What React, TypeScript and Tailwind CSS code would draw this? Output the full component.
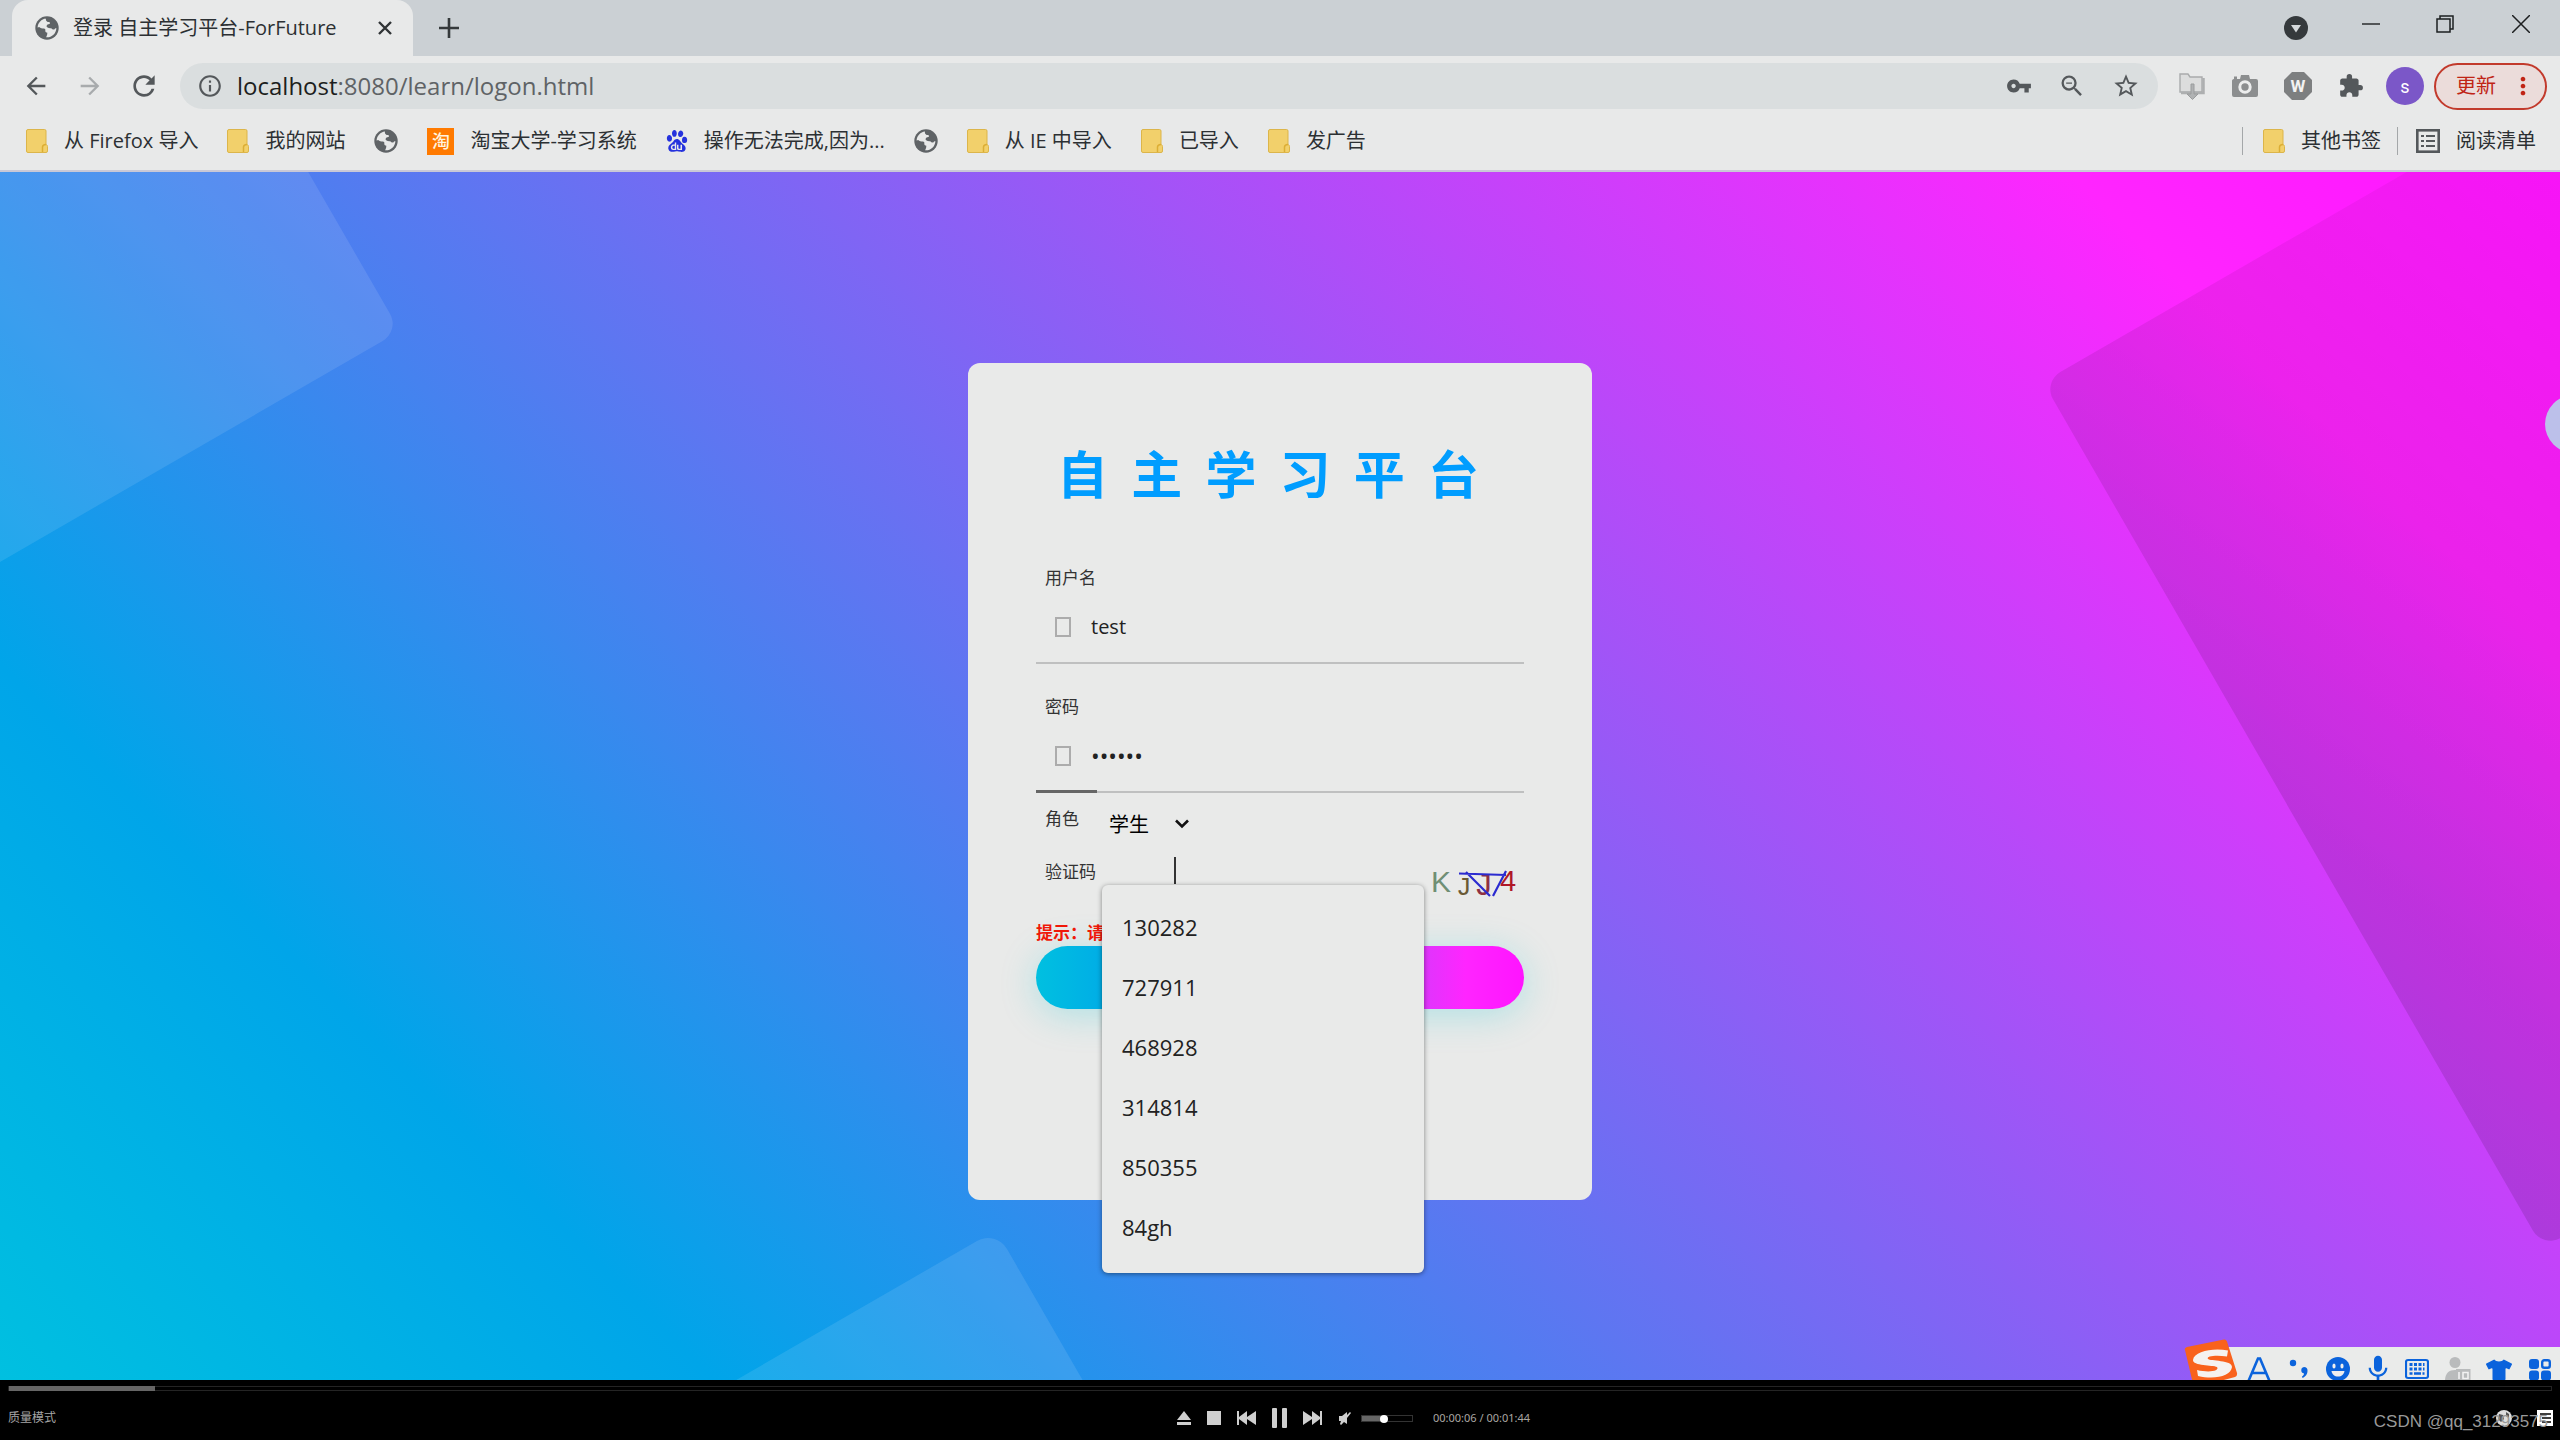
import React from "react";
import {
  MdArrowBack,
  MdArrowForward,
  MdRefresh,
  MdInfoOutline,
  MdVpnKey,
  MdZoomOut,
  MdStarOutline,
  MdExtension,
  MdMoreVert,
  MdMic,
} from "react-icons/md";
import { SiBaidu } from "react-icons/si";
import { FaTshirt } from "react-icons/fa";

const Globe = () => (
  <svg viewBox="0 0 24 24" className="size-6 shrink-0" aria-hidden="true">
    <circle cx="12" cy="12" r="11.7" fill="#5f6366" />
    <path
      d="M11 2.6C6.4 3.2 2.9 6.900 2.600 11.400L4.200 11c1.300 1.100 2.900 1.600 4.600 1.600 1.300.1 1.700.8 1.500 1.900-.2 1.300.5 2 1.900 2.100.3 1.600-.2 3.100-1.100 4.700 5.500.4 10-3.700 10.300-9.100-.9-.1-1.600.5-2.100 1.200-1.200.3-2.300-.1-3-1.200-1.500.2-2.900 0-4.100-.9-.9-.9-.7-2.100.3-2.900 1.200-.5 2.600-.2 2.500-1.500-.1-1.200-1.900-.6-2.800-1.100-1-.7-1.600-1.700-1.200-3.200Z"
      fill="#e8e9e9"
    />
  </svg>
);

const Folder = () => (
  <svg viewBox="0 0 22 24" className="h-6 w-[22px] shrink-0" aria-hidden="true">
    <path d="M2 .5h16.500a1.500 1.500 0 0 1 1.500 1.500v13.500c1 .3 1.500 1 1.500 2V22a1.500 1.500 0 0 1-1.500 1.500H2A1.500 1.500 0 0 1 .5 22V2A1.500 1.500 0 0 1 2 .5Z" fill="#f2d06b" stroke="#dcb54a" />
    <path d="M16.500 23v-5c0-1.500 1-2.300 3.500-2.500" fill="none" stroke="#dcae34" strokeWidth="1.500" />
  </svg>
);

const ReadingList = () => (
  <svg viewBox="0 0 24 24" className="size-6 shrink-0" aria-hidden="true">
    <rect x="1.300" y="1.300" width="21.400" height="21.400" fill="none" stroke="#54585b" strokeWidth="2.600" />
    <path d="M5 7h3M5 12h3M5 17h3M10 7h9M10 12h9M10 17h9" stroke="#54585b" strokeWidth="2" />
  </svg>
);

function Bookmark({ icon, label }: { icon: React.ReactNode; label?: string }) {
  return (
    <a href="#" aria-label={label ?? "网页"} className="flex h-8 shrink-0 items-center gap-4 whitespace-nowrap">
      {icon}
      {label && <span>{label}</span>}
    </a>
  );
}

function TabStrip() {
  return (
    <div className="flex h-14 items-stretch bg-[#cbd0d4] pl-3">
      <div className="flex w-[401px] items-center rounded-t-2xl bg-[#e8e9e9] pr-4 pl-[23px]">
        <Globe />
        <span className="ml-3.5 flex-1 text-[20px] whitespace-nowrap text-[#2c3033]">登录 自主学习平台-ForFuture</span>
        <button aria-label="关闭标签页" className="flex size-6 items-center justify-center">
          <svg viewBox="0 0 14 14" className="size-3.5">
            <path d="M1 1l12 12M13 1L1 13" stroke="#303436" strokeWidth="2.400" />
          </svg>
        </button>
      </div>
      <button aria-label="新标签页" className="ml-6 flex w-6 items-center justify-center">
        <svg viewBox="0 0 20 20" className="size-5">
          <path d="M10 0v20M0 10h20" stroke="#35393b" strokeWidth="2.600" />
        </svg>
      </button>
      <div className="ml-auto flex items-center pr-[30px]">
        <button aria-label="搜索标签页" className="mr-[54px]">
          <svg viewBox="0 0 24 24" className="size-6">
            <circle cx="12" cy="12" r="12" fill="#35393c" />
            <path d="M7 9h10l-5 7.500Z" fill="#d5d9dc" />
          </svg>
        </button>
        <button aria-label="最小化" className="mr-14 pb-2">
          <svg viewBox="0 0 18 18" className="size-[18px]">
            <path d="M0 9h18" stroke="#2a2c2e" strokeWidth="1.500" />
          </svg>
        </button>
        <button aria-label="还原" className="mr-[58px] pb-2">
          <svg viewBox="0 0 18 18" className="size-[18px]" fill="none" stroke="#1d1f20" strokeWidth="1.500">
            <path d="M1 4h13v13H1zM4 4V1h13v13h-3" />
          </svg>
        </button>
        <button aria-label="关闭" className="pb-2">
          <svg viewBox="0 0 18 18" className="size-[18px]">
            <path d="M0 0l18 18M18 0L0 18" stroke="#1d1f20" strokeWidth="1.500" />
          </svg>
        </button>
      </div>
    </div>
  );
}

function Toolbar() {
  return (
    <div className="flex h-15 items-center bg-[#e8e9e9] pr-[13px] pl-[22px] text-[#54585b]">
      <button aria-label="后退"><MdArrowBack className="size-7" /></button>
      <button aria-label="前进" className="ml-[26px] text-[#a8abad]"><MdArrowForward className="size-7" /></button>
      <button aria-label="重新加载" className="ml-[24px]"><MdRefresh className="size-8" /></button>
      <div className="ml-5 flex h-[46px] flex-1 items-center rounded-full bg-[#dadedf] pr-[18px] pl-[17px]">
        <MdInfoOutline className="size-[26px]" />
        <div className="ml-3.5 flex-1 text-[24px] leading-8 text-[#5f6366]">
          <span className="text-[#1d1f20]">localhost</span>:8080/learn/logon.html
        </div>
        <div className="flex items-center gap-[26px]">
          <button aria-label="密码"><MdVpnKey className="size-[26px]" /></button>
          <button aria-label="缩放"><MdZoomOut className="size-7" /></button>
          <button aria-label="收藏"><MdStarOutline className="size-7" /></button>
        </div>
      </div>
      <div className="ml-5 flex items-center gap-[26px]">
        <button aria-label="下载扩展程序">
          <svg viewBox="0 0 28 28" className="size-7">
            <path d="M2 2h8l2 3h12v15H2z" fill="#dcdddd" stroke="#a9abac" strokeWidth="1.400" />
            <path d="M25.500 6v15H3" fill="none" stroke="#adafb0" strokeWidth="2.500" />
            <path d="M13 12h3v10h4l-5.500 5.500L9 22h4Z" fill="#b0b2b3" stroke="#9a9c9d" />
          </svg>
        </button>
        <button aria-label="截图扩展程序">
          <svg viewBox="0 0 26 24" className="h-6 w-[26px]">
            <path d="M2 2.500h3V5h3l1-4h8l1 4h6a2 2 0 0 1 2 2v14a2 2 0 0 1-2 2H2a2 2 0 0 1-2-2V7c0-1 .500-2 2-2Z" fill="#8c8e8f" />
            <circle cx="13" cy="13" r="5.200" fill="none" stroke="#eceded" strokeWidth="3" />
          </svg>
        </button>
        <button aria-label="W 扩展程序">
          <svg viewBox="0 0 28 28" className="size-7">
            <path d="M8 0h12l8 8v12l-8 8H8l-8-8V8Z" fill="#7d7f80" />
            <text x="14" y="20" textAnchor="middle" fill="#f2f2f2" className="font-['Roboto'] text-[17px] font-bold">W</text>
          </svg>
        </button>
        <button aria-label="扩展程序"><MdExtension className="size-[26px]" /></button>
      </div>
      <button className="ml-[22px] size-[38px] rounded-full bg-[#7b57c8] font-['Roboto'] text-[18px] text-white" aria-label="用户 s">s</button>
      <button className="ml-2.5 flex h-[47px] w-[113px] items-center justify-between rounded-full border-2 border-[#c23a2c] bg-[#ebdcda] pr-2 pl-5 text-[20px] text-[#c02415]">
        更新
        <MdMoreVert className="size-7" />
      </button>
    </div>
  );
}

function Bookmarks() {
  return (
    <div className="flex h-14 items-center border-b-2 border-[#c9c8d6] bg-[#e8e9e9] pr-6 pb-1 pl-[26px] text-[20px] text-[#2c3033]">
      <nav className="flex items-center gap-[29px]">
        <Bookmark icon={<Folder />} label="从 Firefox 导入" />
        <Bookmark icon={<Folder />} label="我的网站" />
        <Bookmark icon={<Globe />} />
        <Bookmark
          icon={<span aria-hidden="true" className="flex size-[27px] items-center justify-center bg-[#ff7a00] text-[18px] font-medium text-[#fff3df]">淘</span>}
          label="淘宝大学-学习系统"
        />
        <Bookmark icon={<SiBaidu className="size-[22px] text-[#2532dd]" />} label="操作无法完成,因为..." />
        <Bookmark icon={<Globe />} />
        <Bookmark icon={<Folder />} label="从 IE 中导入" />
        <Bookmark icon={<Folder />} label="已导入" />
        <Bookmark icon={<Folder />} label="发广告" />
      </nav>
      <div className="ml-auto flex items-center gap-4">
        <span className="mr-1 h-7 w-px bg-[#a4a7a9]" />
        <Bookmark icon={<Folder />} label="其他书签" />
        <span className="mr-0.5 h-7 w-px bg-[#a4a7a9]" />
        <Bookmark icon={<ReadingList />} label="阅读清单" />
      </div>
    </div>
  );
}

const Backdrop = () => (
  <svg viewBox="0 0 2560 1208" preserveAspectRatio="xMidYMid slice" className="absolute inset-0 size-full" aria-hidden="true">
    <defs>
      <linearGradient id="shade" x1="0" y1="0.500" x2="0.700" y2="0.200">
        <stop offset="0" stopColor="#000" stopOpacity="0.120" />
        <stop offset="1" stopColor="#000" stopOpacity="0.020" />
      </linearGradient>
    </defs>
    <rect x="-600" y="-441" width="1000" height="600" rx="20" fill="#fff" fillOpacity="0.100" transform="rotate(-30 400 159)" />
    <rect x="396" y="1058" width="600" height="600" rx="22" fill="#fff" fillOpacity="0.100" transform="rotate(-30 996 1058)" />
    <rect x="2043" y="210" width="1000" height="1000" rx="20" fill="url(#shade)" transform="rotate(-30 2043 210)" />
  </svg>
);

function Field({ id, label, type, value, active }: { id: string; label: string; type: string; value: string; active?: boolean }) {
  return (
    <div className="relative border-b-2 border-[#bfc0c0]">
      <label htmlFor={id} className="block pl-[9px] text-[17px] leading-6 text-[#333]">{label}</label>
      <div className="flex h-[72px] items-center pt-0.5 pl-[19px]">
        <span className="h-5 w-4 border-2 border-[#acacac]" />
        <input
          id={id}
          type={type}
          defaultValue={value}
          className={`ml-5 h-full min-w-0 flex-1 bg-transparent text-[#222] outline-none ${type === "password" ? "text-[23px]" : "text-[20px]"}`}
        />
      </div>
      {active && <span className="absolute -bottom-0.5 left-0 h-[3px] w-[61px] bg-[#666]" />}
    </div>
  );
}

const suggestions = ["130282", "727911", "468928", "314814", "850355", "84gh"];

function LoginCard() {
  return (
    <form className="relative mt-2.5 w-[624px] rounded-xl bg-[#e9eae9] px-17 pt-[79px] pb-[191px]">
      <h1 className="pr-6 text-center font-['Noto_Sans_CJK_SC',sans-serif] text-[51px] leading-15 font-bold whitespace-pre text-[#009dff]">
        自  主  学  习  平  台
      </h1>
      <div className="mt-16">
        <Field id="user" label="用户名" type="text" value="test" />
      </div>
      <div className="mt-[31px]">
        <Field id="pass" label="密码" type="password" value="123456" active />
      </div>
      <div className="mt-3.5 flex items-start pl-[9px]">
        <label htmlFor="role" className="w-16 text-[17px] leading-6 text-[#333]">角色</label>
        <div className="relative mt-0.5">
          <select id="role" className="h-8 w-[86px] appearance-none bg-transparent text-[20px] text-black outline-none">
            <option>学生</option>
            <option>教师</option>
          </select>
          <svg viewBox="0 0 14 10" className="pointer-events-none absolute top-2.5 right-1.5 h-2.5 w-3.5">
            <path d="M1 1.500l6 6 6-6" fill="none" stroke="#111" strokeWidth="2.600" />
          </svg>
        </div>
      </div>
      <div className="mt-4 flex h-[64px] items-start pl-[9px]">
        <label htmlFor="code" className="mt-[3px] w-[57px] text-[17px] leading-6 whitespace-nowrap text-[#333]">验证码</label>
        <div className="relative h-7 w-[322px]">
          <input id="code" type="text" className="h-full w-full bg-transparent pl-[72px] text-[20px] outline-none" />
          <span className="absolute top-0 left-[72px] h-[27px] w-0.5 bg-[#333]" />
          <ul role="listbox" aria-label="历史输入" className="absolute top-full left-0 z-10 w-full rounded-md bg-[#e9eae9] pt-3 pb-4 shadow-[0_1px_5px_rgba(0,0,0,0.450)]">
            {suggestions.map((s) => (
              <li key={s} role="option" aria-selected="false" className="flex h-15 items-center pl-5 text-[22px] leading-8 text-[#222]">{s}</li>
            ))}
          </ul>
        </div>
        <svg viewBox="0 0 92 52" className="ml-1 h-[52px] w-[92px] overflow-visible font-['Liberation_Sans']" role="img" aria-label="验证码图片">
          <text x="3" y="35" fontSize="30" fill="#6f8f74">K</text>
          <text x="28" y="38" fontSize="26" fill="#6b5a35" className="font-['Liberation_Mono']">J</text>
          <text x="46" y="38" fontSize="32" fill="#8f3142" className="font-['Liberation_Mono']">J</text>
          <text x="72" y="34" fontSize="29" fill="#b01828">4</text>
          <path d="M31 16.500l47 1.500M38 15l24 24M78 14L65 39" stroke="#2b2bd0" strokeWidth="2.200" fill="none" />
        </svg>
      </div>
      <p className="text-[17px] leading-6 font-bold text-[#f01808]">提示：请</p>
      <button
        type="button"
        aria-label="登录"
        className="mt-px block h-[63px] w-full rounded-full bg-[linear-gradient(90deg,#00c0e0_0%,#00a5e9_20%,#ff25ff_88%,#ff14ff_100%)] shadow-[0_6px_36px_rgba(0,200,215,0.250)]"
      />
    </form>
  );
}

function ImeBar() {
  return (
    <div className="absolute right-0 bottom-0 flex h-[33px] w-[340px] items-start bg-[#eaebea] pl-[27px] text-[#0b63dc]">
      <svg viewBox="0 0 54 50" className="absolute bottom-[-9px] left-[-36px] h-[50px] w-[54px]" aria-hidden="true">
        <path d="M1 11Q0 9 3 8L40 .5q2-.4 3 2L53 34q.5 3-2 4L10 49Z" fill="#f9621c" />
        <path d="M44 11.500C30 8.500 10 12 9 21c-.5 6 20 5 24 7 3 4-8 6-20 3l1 6c17 4 33 0 34-9 .5-7-22-6-24-8-2-3 8-4 19-2.500Z" fill="#f5f2ef" />
      </svg>
      <div className="flex w-full items-start justify-between pt-2.5 pr-2">
        <svg viewBox="0 0 24 24" className="size-6"><path d="M1.500 24L11 1.500h2L22.500 24M5.500 16h13" fill="none" stroke="currentColor" strokeWidth="2.600" /></svg>
        <svg viewBox="0 0 24 24" className="size-6" fill="currentColor"><circle cx="6" cy="6" r="3.200" /><path d="M17 10a3.500 3.500 0 0 1 3.500 3.500c0 4-2 6-5 7.500l-.5-1.500c1.500-1 2-1.800 2-3a3.300 3.300 0 0 1 0-6.500Z" /></svg>
        <svg viewBox="0 0 24 24" className="size-6"><circle cx="12" cy="12" r="12" fill="currentColor" /><ellipse cx="8" cy="9" rx="1.600" ry="2.600" fill="#eee" /><ellipse cx="16" cy="9" rx="1.600" ry="2.600" fill="#eee" /><path d="M5.500 14h13c-.5 3.500-3 5.500-6.500 5.500S6 17.500 5.500 14Z" fill="#eee" /></svg>
        <MdMic className="-mx-1 -mt-1 size-8" />
        <svg viewBox="0 0 24 24" className="size-6"><rect x="1" y="3" width="22" height="18" rx="2" fill="none" stroke="currentColor" strokeWidth="2.200" /><path d="M4.500 7.500h15M4.500 12h15" stroke="currentColor" strokeWidth="3" strokeDasharray="3 1.500" /><path d="M4.500 16.500h3M9 16.500h7M17.500 16.500h2" stroke="currentColor" strokeWidth="2.600" /></svg>
        <svg viewBox="0 0 26 26" className="size-[26px]"><circle cx="10" cy="5.500" r="5.500" fill="#b9bbbc" /><path d="M0 24c0-8 4-11 10-11h3v11Z" fill="#b9bbbc" /><rect x="11" y="12" width="14.500" height="13" fill="#b9bbbc" /><path d="M14 15v7M18 15.500h5v6h-5z" fill="none" stroke="#f2f2f2" strokeWidth="1.600" /></svg>
        <FaTshirt className="size-[26px]" />
        <svg viewBox="0 0 24 24" className="size-6" fill="currentColor"><rect x="1" y="2" width="10" height="10" rx="3" /><rect x="1" y="13.500" width="10" height="10" rx="3" /><rect x="13" y="13.500" width="10" height="10" rx="3" /><rect x="14.200" y="3.200" width="7.600" height="7.600" rx="2" fill="none" stroke="currentColor" strokeWidth="2.400" /></svg>
      </div>
    </div>
  );
}

function Player() {
  return (
    <footer className="relative h-15 overflow-hidden bg-black px-2 pt-1.5 font-['Noto_Sans',_'Noto_Sans_CJK_SC',sans-serif] text-[12px] text-[#aaa7a3]">
      <div className="h-[5px] border border-[#242424]">
        <div className="-my-px h-[5px] w-[146px] bg-[#666]" />
      </div>
      <div className="mt-3 flex h-[30px] items-center text-[#cfcfcf]">
        <div className="flex flex-1 basis-0 items-center gap-4">
          <span className="mr-auto text-[12px] text-[#a5a5a5]">质量模式</span>
          <button aria-label="弹出"><svg viewBox="0 0 14 14" className="size-3.5" fill="currentColor"><path d="M7 0l7 9H0zM0 11h14v3H0z" /></svg></button>
          <button aria-label="停止"><svg viewBox="0 0 14 14" className="size-3.5" fill="currentColor"><path d="M0 0h14v14H0z" /></svg></button>
          <button aria-label="上一个" className="mr-[15px]"><svg viewBox="0 0 20 14" className="h-3.5 w-5" fill="currentColor"><path d="M0 0h2v6l8-6v6l9-6v14l-9-6v6L2 8v6H0z" /></svg></button>
        </div>
        <button aria-label="暂停"><svg viewBox="0 0 16 20" className="h-5 w-4" fill="currentColor"><rect width="5" height="20" rx="1" /><rect x="10" width="5" height="20" rx="1" /></svg></button>
        <div className="flex flex-1 basis-0 items-center">
          <button aria-label="下一个" className="ml-[15px]"><svg viewBox="0 0 20 14" className="h-3.5 w-5" fill="currentColor"><path d="M19 0h-2v6L9 0v6L0 0v14l9-6v6l8-6v6h2z" /></svg></button>
          <button aria-label="静音" className="ml-4"><svg viewBox="0 0 12 14" className="h-3.5 w-3" fill="currentColor"><path d="M0 5h3l5-4v3l3-3 1 1-4 5v6l-3-2-3 3-1-1 1-3H0z" /></svg></button>
          <div className="relative ml-2.5 h-[7px] w-[52px] border border-[#333]">
            <div className="h-full w-[22px] bg-[#666]" />
            <span className="absolute -top-px left-[18px] size-2 rounded-full bg-white" />
          </div>
          <span className="ml-5 text-[11px] text-[#aaa7a3]">00:00:06 / 00:01:44</span>
        </div>
      </div>
      <div className="absolute top-[29px] right-1.5 flex items-center gap-6">
        <svg viewBox="0 0 16 16" className="size-4"><circle cx="8" cy="8" r="8" fill="#ddd" /><path d="M3 4l4 1 1 4-3 3-3-3zM10 2l3 2v4l-3-2z" fill="#555" /></svg>
        <svg viewBox="0 0 18 18" className="size-[18px]"><path d="M1 1h16v16H1z" fill="#fff" /><path d="M4 5h11M6 9h9M6 13h9" stroke="#000" strokeWidth="1.600" /></svg>
      </div>
      <span className="absolute top-[30px] right-3 font-['Liberation_Sans'] text-[17px] leading-6 text-[#999]">CSDN @qq_31293575</span>
    </footer>
  );
}

export default function App() {
  return (
    <div className="flex min-h-screen flex-col bg-black font-['Open_Sans','Noto_Sans_CJK_SC',sans-serif]">
      <header>
        <TabStrip />
        <Toolbar />
        <Bookmarks />
      </header>
      <main className="relative flex flex-1 items-center justify-center overflow-hidden bg-[linear-gradient(45deg,#00c0e0_0%,#00a5e9_19%,#ff25ff_87%,#ff14ff_100%)]">
        <Backdrop />
        <LoginCard />
        <span className="absolute top-[223px] right-[-43px] size-[58px] rounded-full bg-[#bcc0ea]" />
        <ImeBar />
      </main>
      <Player />
    </div>
  );
}
